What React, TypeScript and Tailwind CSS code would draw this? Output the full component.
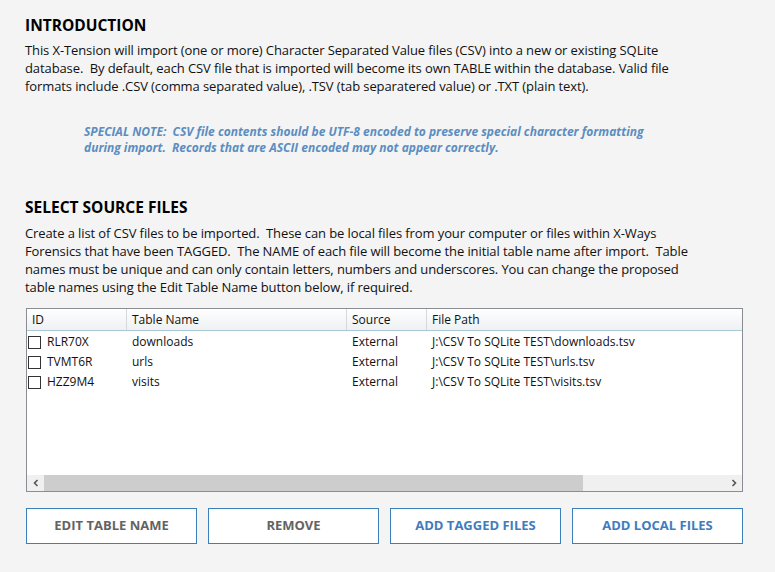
const rows = [
  { id: "RLR70X", name: "downloads", source: "External", path: "J:\\CSV To SQLite TEST\\downloads.tsv" },
  { id: "TVMT6R", name: "urls", source: "External", path: "J:\\CSV To SQLite TEST\\urls.tsv" },
  { id: "HZZ9M4", name: "visits", source: "External", path: "J:\\CSV To SQLite TEST\\visits.tsv" },
];

const font = { fontFamily: '"Segoe UI", "Open Sans", "Noto Sans", sans-serif' };

function Button({ label, blue }: { label: string; blue?: boolean }) {
  return (
    <button
      className={
        "w-[171px] h-[36px] bg-white border border-[#3d7ebd] text-[13px] font-bold " +
        (blue ? "text-[#3f7cbf]" : "text-[#636363]")
      }
    >
      {label}
    </button>
  );
}

export default function App() {
  return (
    <div className="w-[775px] h-[572px] bg-[#f4f4f4] text-[#111] overflow-hidden" style={font}>
      <div className="pl-[25px] pt-[14px]">
        <h1 className="text-[15.5px] font-bold leading-[22px] text-black">INTRODUCTION</h1>
        <p className="text-[13px] leading-[18px] mt-[5px] tracking-[-0.1px]">
          This X-Tension will import (one or more) Character Separated Value files (CSV) into a new or existing SQLite
          <br />
          database.&nbsp; By default, each CSV file that is imported will become its own TABLE within the database. Valid file
          <br />
          formats include .CSV (comma separated value), .TSV (tab separatered value) or .TXT (plain text).
        </p>
        <p className="ml-[59px] mt-[29px] text-[12px] leading-[16px] italic font-bold text-[#5b8dc0]">
          SPECIAL NOTE:&nbsp; CSV file contents should be UTF-8 encoded to preserve special character formatting
          <br />
          during import.&nbsp; Records that are ASCII encoded may not appear correctly.
        </p>

        <h2 className="mt-[41px] text-[15.5px] font-bold leading-[20px] text-black">SELECT SOURCE FILES</h2>
        <p className="text-[13px] leading-[18px] mt-[7px] tracking-[-0.1px]">
          Create a list of CSV files to be imported.&nbsp; These can be local files from your computer or files within X-Ways
          <br />
          Forensics that have been TAGGED.&nbsp; The NAME of each file will become the initial table name after import.&nbsp; Table
          <br />
          names must be unique and can only contain letters, numbers and underscores. You can change the proposed
          <br />
          table names using the Edit Table Name button below, if required.
        </p>
      </div>

      <div className="ml-[26px] mt-[12px] w-[717px] h-[184px] border border-[#8a8d94] bg-white flex flex-col">
        <div className="flex h-[22px] border-b border-[#a9c8d8] bg-gradient-to-b from-white to-[#eef0f2] text-[12px] leading-[21px]">
          <div className="w-[100px] pl-[5px] border-r border-[#d6d8dc]">ID</div>
          <div className="w-[220px] pl-[5px] border-r border-[#d6d8dc]">Table Name</div>
          <div className="w-[80px] pl-[5px] border-r border-[#d6d8dc]">Source</div>
          <div className="flex-1 pl-[5px]">File Path</div>
        </div>
        <div className="flex-1 text-[12px] pt-[1px]">
          {rows.map((r) => (
            <div key={r.id} className="flex h-[20px] items-center">
              <div className="w-[100px] flex items-center pl-[1px]">
                <span className="w-[13px] h-[13px] border border-[#333] bg-white mr-[6px]" />
                <span>{r.id}</span>
              </div>
              <div className="w-[220px] pl-[5px]">{r.name}</div>
              <div className="w-[80px] pl-[5px]">{r.source}</div>
              <div className="flex-1 pl-[5px]">{r.path}</div>
            </div>
          ))}
        </div>
        <div className="h-[16px] flex bg-[#f0f0f0] items-center">
          <div className="w-[17px] flex justify-center">
            <svg width="8" height="8" viewBox="0 0 8 8">
              <path d="M5.5 1 L2.5 4 L5.5 7" stroke="#555" strokeWidth="1.6" fill="none" />
            </svg>
          </div>
          <div className="w-[539px] h-full bg-[#cdcdcd]" />
          <div className="flex-1" />
          <div className="w-[17px] flex justify-center">
            <svg width="8" height="8" viewBox="0 0 8 8">
              <path d="M2.5 1 L5.5 4 L2.5 7" stroke="#555" strokeWidth="1.6" fill="none" />
            </svg>
          </div>
        </div>
      </div>

      <div className="ml-[26px] mt-[16px] flex gap-[11px]">
        <Button label="EDIT TABLE NAME" />
        <Button label="REMOVE" />
        <Button label="ADD TAGGED FILES" blue />
        <Button label="ADD LOCAL FILES" blue />
      </div>
    </div>
  );
}
